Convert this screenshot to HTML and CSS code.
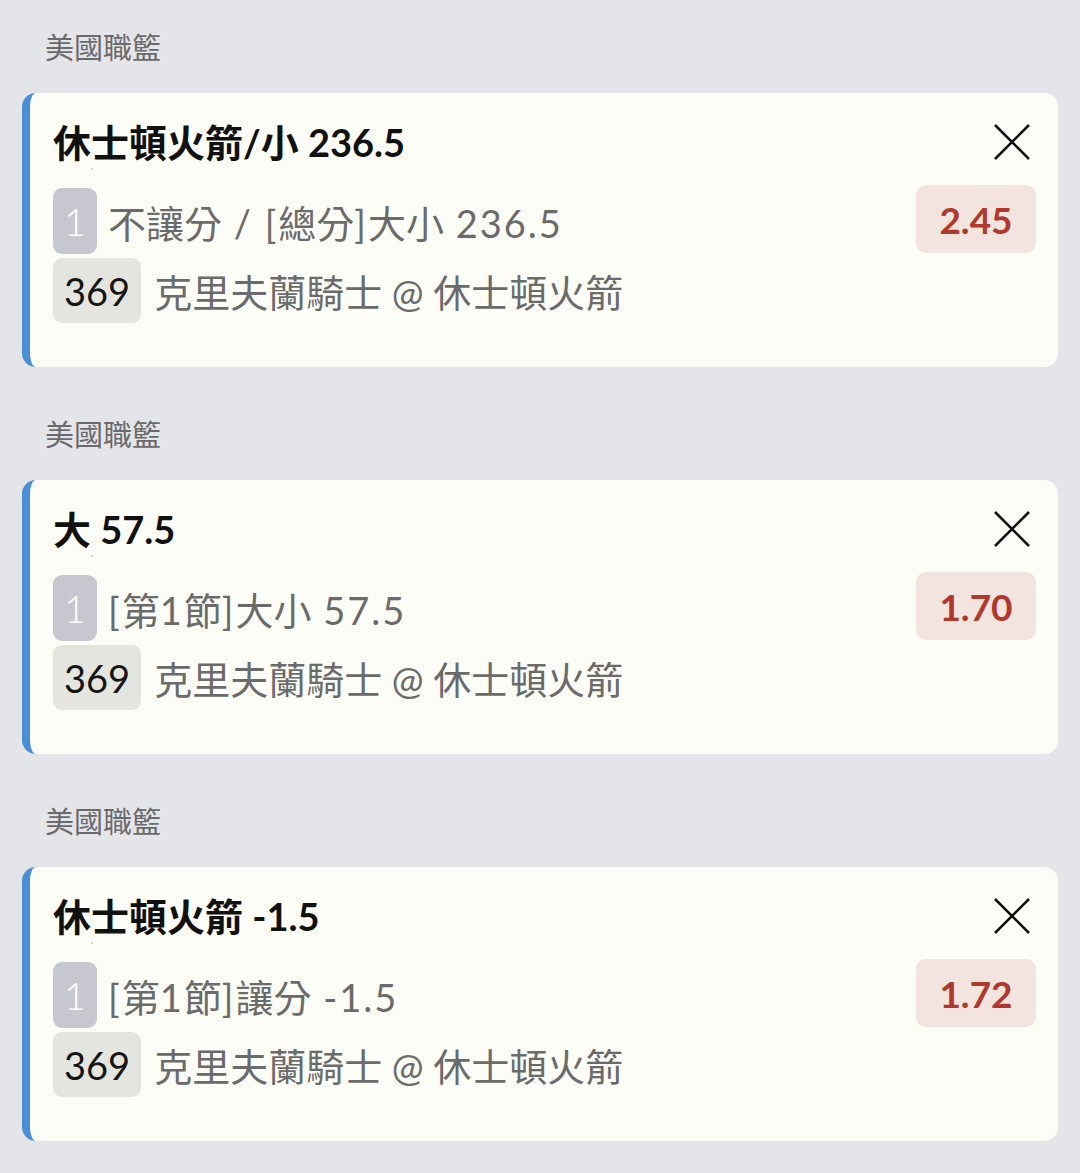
FILE: index.html
```html
<!DOCTYPE html>
<html lang="zh-Hant">
<head>
<meta charset="utf-8">
<title>投注單</title>
<link rel="stylesheet" href="styles.css">
</head>
<body>
<div class="list">
  <div class="section">
    <div class="league">美國職籃</div>
    <div class="card">
      <div class="head">
        <div class="title">休士頓火箭/小 236.5</div>
        <svg class="close" viewBox="0 0 48 48"><path d="M7 7 L41 41 M41 7 L7 41"/></svg>
      </div>
      <div class="dot"></div>
      <div class="body">
        <div class="rows">
          <div class="row"><span class="badge seq">1</span><span class="txt">不讓分<span class="lat"> / [</span>總分<span class="lat">]</span>大小<span class="lat"> 236.5</span></span></div>
          <div class="row"><span class="badge code">369</span><span class="txt">克里夫蘭騎士 @ 休士頓火箭</span></div>
        </div>
        <div class="odds">2.45</div>
      </div>
    </div>
  </div>
  <div class="section">
    <div class="league">美國職籃</div>
    <div class="card">
      <div class="head">
        <div class="title">大 57.5</div>
        <svg class="close" viewBox="0 0 48 48"><path d="M7 7 L41 41 M41 7 L7 41"/></svg>
      </div>
      <div class="dot"></div>
      <div class="body">
        <div class="rows">
          <div class="row"><span class="badge seq">1</span><span class="txt"><span class="lat">[</span>第<span class="lat">1</span>節<span class="lat">]</span>大小<span class="lat"> 57.5</span></span></div>
          <div class="row"><span class="badge code">369</span><span class="txt">克里夫蘭騎士 @ 休士頓火箭</span></div>
        </div>
        <div class="odds">1.70</div>
      </div>
    </div>
  </div>
  <div class="section">
    <div class="league">美國職籃</div>
    <div class="card">
      <div class="head">
        <div class="title">休士頓火箭 -1.5</div>
        <svg class="close" viewBox="0 0 48 48"><path d="M7 7 L41 41 M41 7 L7 41"/></svg>
      </div>
      <div class="dot"></div>
      <div class="body">
        <div class="rows">
          <div class="row"><span class="badge seq">1</span><span class="txt"><span class="lat">[</span>第<span class="lat">1</span>節<span class="lat">]</span>讓分<span class="lat"> -1.5</span></span></div>
          <div class="row"><span class="badge code">369</span><span class="txt">克里夫蘭騎士 @ 休士頓火箭</span></div>
        </div>
        <div class="odds">1.72</div>
      </div>
    </div>
  </div>
</div>
</body>
</html>
```

FILE: styles.css
```css
html, body {
  margin: 0;
  padding: 0;
  background: #e4e5e9;
}
body {
  font-family: Lato, "Noto Sans CJK TC", "Noto Sans CJK SC", sans-serif;
  width: 1080px;
}
.list {
  padding: 28px 22px 34px 22px;
  display: flex;
  flex-direction: column;
  gap: 48px;
}
.league {
  font-size: 29px;
  line-height: 40px;
  color: #6a6a6a;
  padding-left: 23px;
  margin-bottom: 25px;
}
.card {
  background: #fdfdf7;
  border-left: 8px solid #4a8fd6;
  border-radius: 14px;
  padding: 23px 22px 44px 23px;
}
.head {
  display: flex;
  align-items: center;
  justify-content: space-between;
  height: 52px;
}
.title {
  font-size: 38px;
  font-weight: 700;
  color: #111;
  line-height: 52px;
}
.close {
  width: 48px;
  height: 48px;
}
.close path {
  stroke: #111;
  stroke-width: 2.6;
  fill: none;
}
.dot {
  width: 2px;
  height: 2px;
  background: #c8c8c8;
  border-radius: 1px;
  margin: 0 0 0 38px;
}
.body {
  display: flex;
  justify-content: space-between;
  align-items: flex-start;
  margin-top: 18px;
}
.rows {
  display: flex;
  flex-direction: column;
  gap: 4px;
}
.row {
  display: flex;
  align-items: center;
  gap: 11px;
}
.badge {
  height: 66px;
  padding: 0 11px;
  border-radius: 9px;
  display: flex;
  align-items: center;
  font-size: 38px;
}
.seq {
  background: #c6c7cf;
  color: #fff;
  font-weight: 300;
}
.code {
  background: #e5e5df;
  color: #151515;
  height: 65px;
  margin-right: 2px;
}
.txt {
  font-size: 38px;
  color: #6b6b6b;
}
.lat {
  letter-spacing: 2px;
}
.odds {
  width: 120px;
  height: 68px;
  border-radius: 10px;
  background: #f3e4df;
  color: #b0382d;
  font-size: 37px;
  font-weight: 700;
  display: flex;
  align-items: center;
  justify-content: center;
  margin-top: -3px;
}
```
